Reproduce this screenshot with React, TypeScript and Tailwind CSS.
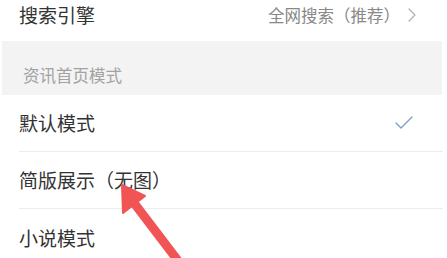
import { Check, ChevronRight } from 'lucide-react'

const font = { fontFamily: '"Noto Sans CJK SC", "Noto Sans", sans-serif' }

const Row = ({ label, checked, last }: { label: string; checked?: boolean; last?: boolean }) => (
  <div className="pl-[19px] pr-[4px]">
    <div className={`flex items-center justify-between h-[57px] ${last ? '' : 'border-b border-[#ececec]'}`}>
      <span className="text-[19px] leading-[24px] text-[#333]">{label}</span>
      {checked && <Check className="w-[24px] h-[24px] mr-[27px] text-[#7f9dc6]" strokeWidth={1.4} />}
    </div>
  </div>
)

export default function App() {
  return (
    <div className="relative w-[447px] h-[258px] overflow-hidden bg-white" style={font}>
      {/* 搜索引擎 */}
      <div className="flex items-start justify-between h-[41px] pl-[19px] pr-[23px] pt-[3px]">
        <span className="text-[19px] leading-[24px] text-[#333]">搜索引擎</span>
        <div className="flex items-center text-[16.5px] leading-[24px] text-[#888]">
          <span>全网搜索（推荐）</span>
          <ChevronRight className="w-[24px] h-[24px] text-[#b0b0b0]" strokeWidth={1.2} />
        </div>
      </div>

      {/* section header */}
      <div className="ml-[2px] mr-[5px] h-[54px] bg-[#f3f3f3] pl-[21px] pt-[24px]">
        <span className="block text-[16.5px] leading-[20px] text-[#a2a2a2]">资讯首页模式</span>
      </div>

      <Row label="默认模式" checked />
      <Row label="简版展示（无图）" />
      <Row label="小说模式" last />

      {/* red annotation arrow */}
      <svg className="absolute inset-0 pointer-events-none" width="447" height="258" viewBox="0 0 447 258">
        <line x1="131" y1="199" x2="182" y2="266" stroke="#f05454" strokeWidth="9" strokeLinecap="round" />
        <polygon points="122,185 145,196 123,213" fill="#f05454" strokeLinejoin="round" stroke="#f05454" strokeWidth="2" />
      </svg>
    </div>
  )
}
